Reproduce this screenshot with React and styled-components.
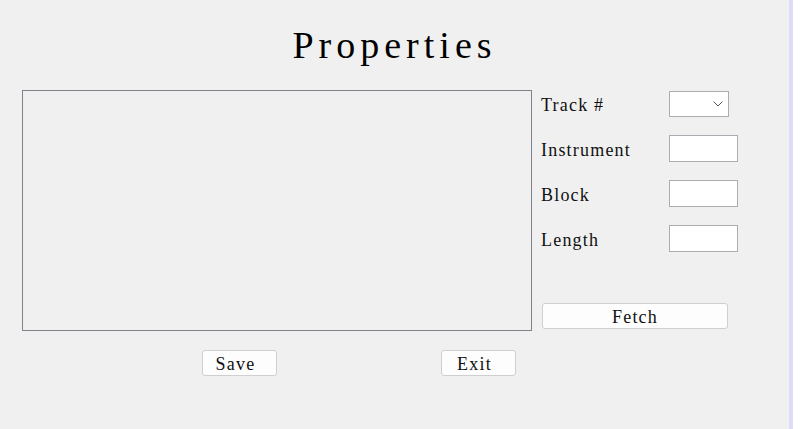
import React from 'react';
import styled, { createGlobalStyle } from 'styled-components';

const GlobalStyle = createGlobalStyle`
  html, body {
    margin: 0;
    padding: 0;
    background: #ffffff;
  }
  * {
    box-sizing: border-box;
  }
`;

const Screen = styled.div`
  display: flex;
  height: 429px;
  width: 800px;
  overflow: hidden;
`;

const Window = styled.div`
  width: 789px;
  height: 429px;
  background: #f0f0f0;
  display: flex;
  flex-direction: column;
  font-family: 'Liberation Serif', 'Times New Roman', serif;
  color: #000;
`;

const Edge = styled.div`
  width: 4px;
  height: 429px;
  background: #dcdcf8;
`;

const Title = styled.h1`
  margin: 0;
  padding-top: 23px;
  height: 67px;
  line-height: 44px;
  font-size: 38px;
  font-weight: normal;
  letter-spacing: 5px;
  text-align: center;
`;

const Main = styled.div`
  display: flex;
  margin-top: 23px;
  padding-left: 22px;
`;

const ListBox = styled.div`
  width: 510px;
  height: 241px;
  border: 1px solid #82828c;
  background: #f0f0f0;
`;

const Side = styled.div`
  display: flex;
  flex-direction: column;
  margin-left: 8px;
  gap: 18px;
`;

const Row = styled.div`
  display: flex;
  align-items: center;
  height: 27px;
`;

const Label = styled.span`
  width: 129px;
  font-size: 18px;
  letter-spacing: 1.2px;
  padding-left: 1px;
  padding-top: 3px;
  color: #111;
`;

const TextBox = styled.div`
  width: 69px;
  height: 27px;
  background: #fff;
  border: 1px solid #abadb3;
`;

const Select = styled.div`
  width: 60px;
  height: 26px;
  background: #fff;
  border: 1px solid #abadb3;
  display: flex;
  align-items: center;
  justify-content: flex-end;
  padding-right: 5px;
`;

const Button = styled.div`
  width: ${(p) => p.w}px;
  height: 26px;
  background: #fdfdfd;
  border: 1px solid #cfcfcf;
  border-radius: 3px;
  display: flex;
  align-items: center;
  justify-content: center;
  padding-top: 3px;
  padding-right: ${(p) => p.shift || 0}px;
  font-size: 18px;
  letter-spacing: 1.2px;
  color: #111;
`;

const FetchWrap = styled.div`
  margin-top: 33px;
  padding-left: 2px;
`;

const Bottom = styled.div`
  display: flex;
  margin-top: 19px;
  padding-left: 202px;
  gap: 164px;
`;

const Chevron = () => (
  <svg width="10" height="6" viewBox="0 0 10 6">
    <path d="M0.5 0.5 L5 5 L9.5 0.5" fill="none" stroke="#555" strokeWidth="1" />
  </svg>
);

const App = () => {
  return (
    <Screen>
      <GlobalStyle />
      <Window>
        <Title>Properties</Title>
        <Main>
          <ListBox />
          <Side>
            <Row>
              <Label>Track #</Label>
              <Select>
                <Chevron />
              </Select>
            </Row>
            <Row>
              <Label>Instrument</Label>
              <TextBox />
            </Row>
            <Row>
              <Label>Block</Label>
              <TextBox />
            </Row>
            <Row>
              <Label>Length</Label>
              <TextBox />
            </Row>
            <FetchWrap>
              <Button w={186}>Fetch</Button>
            </FetchWrap>
          </Side>
        </Main>
        <Bottom>
          <Button w={75} shift={8}>Save</Button>
          <Button w={75} shift={8}>Exit</Button>
        </Bottom>
      </Window>
      <Edge />
    </Screen>
  );
};

export default App;
